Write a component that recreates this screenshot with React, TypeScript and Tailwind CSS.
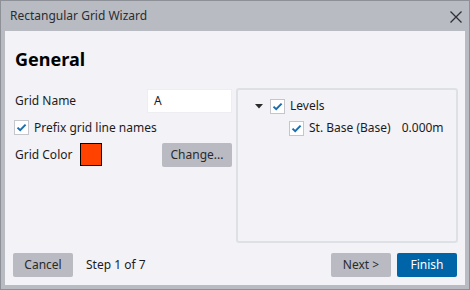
const font = { fontFamily: '"Segoe UI", "Noto Sans", sans-serif' };

const Check = ({ className = '' }: { className?: string }) => (
  <span
    className={`flex h-[15px] w-[15px] items-center justify-center border border-[#c4c6cc] bg-white ${className}`}
  >
    <svg width="11" height="9" viewBox="0 0 11 9">
      <path d="M1.5 4.6 L4.2 7.2 L9.6 1.6" fill="none" stroke="#1a6db3" strokeWidth="2" />
    </svg>
  </span>
);

const GrayButton = ({ children, className = '' }: { children: React.ReactNode; className?: string }) => (
  <button
    className={`flex h-[24px] items-center justify-center rounded-[2px] bg-[#b9bac2] text-[12px] text-[#2a2a2a] ${className}`}
  >
    {children}
  </button>
);

export default function App() {
  return (
    <div
      className="flex h-[290px] w-[470px] flex-col border border-[#8e9098] bg-[#b9bbc2] text-[#1c1c1c]"
      style={font}
    >
      <div className="flex h-[30px] items-center justify-between pl-[9px] pr-[7px]">
        <span className="text-[12px] text-[#2b2b30]">Rectangular Grid Wizard</span>
        <svg width="12" height="12" viewBox="0 0 12 12" className="mt-[1px]">
          <path d="M0.5 0.5 L11.5 11.5 M11.5 0.5 L0.5 11.5" stroke="#2f3036" strokeWidth="1.3" />
        </svg>
      </div>

      <div className="mx-[4px] mb-[4px] flex flex-1 flex-col bg-[#f2f2f7]">
        <h1 className="pl-[10px] pt-[16px] text-[18px] font-bold leading-[24px] text-black">General</h1>

        <div className="mt-[17px] flex h-[155px] gap-[4px] pr-[7px]">
          <div className="flex w-[227px] flex-col pl-[10px] pt-[1px]">
            <div className="flex h-[24px] items-center justify-between">
              <span className="text-[12px]">Grid Name</span>
              <div className="flex h-[24px] w-[85px] items-center border border-[#eeeef2] bg-white pl-[6px] text-[12px]">
                A
              </div>
            </div>
            <div className="mt-[7px] flex h-[15px] items-center gap-[5px]">
              <Check className="-ml-[1px]" />
              <span className="text-[12px]">Prefix grid line names</span>
            </div>
            <div className="mt-[7px] flex h-[25px] items-center">
              <span className="text-[12px]">Grid Color</span>
              <span className="ml-[8px] h-[23px] w-[22px] border border-black bg-[#ff4200]" />
              <GrayButton className="ml-auto w-[70px]">Change...</GrayButton>
            </div>
          </div>

          <div className="flex-1 rounded-[3px] border-2 border-[#dde1e5] pt-[8px]">
            <div className="flex h-[16px] items-center">
              <svg className="ml-[17px]" width="8" height="5" viewBox="0 0 8 5">
                <path d="M0 0 H8 L4 4.5 Z" fill="#2b2b2b" />
              </svg>
              <Check className="ml-[7px]" />
              <span className="ml-[5px] text-[12px]">Levels</span>
            </div>
            <div className="mt-[6px] flex h-[16px] items-center">
              <Check className="ml-[51px]" />
              <span className="ml-[5px] text-[12px]">St. Base (Base)</span>
              <span className="ml-[11px] text-[12px]">0.000m</span>
            </div>
          </div>
        </div>

        <div className="mt-[10px] flex items-center pl-[8px] pr-[8px]">
          <GrayButton className="w-[60px]">Cancel</GrayButton>
          <span className="ml-[13px] text-[12px]">Step 1 of 7</span>
          <GrayButton className="ml-auto w-[60px]">Next &gt;</GrayButton>
          <button className="ml-[6px] flex h-[24px] w-[60px] items-center justify-center rounded-[2px] bg-[#0064a8] text-[12px] text-white">
            Finish
          </button>
        </div>
      </div>
    </div>
  );
}
